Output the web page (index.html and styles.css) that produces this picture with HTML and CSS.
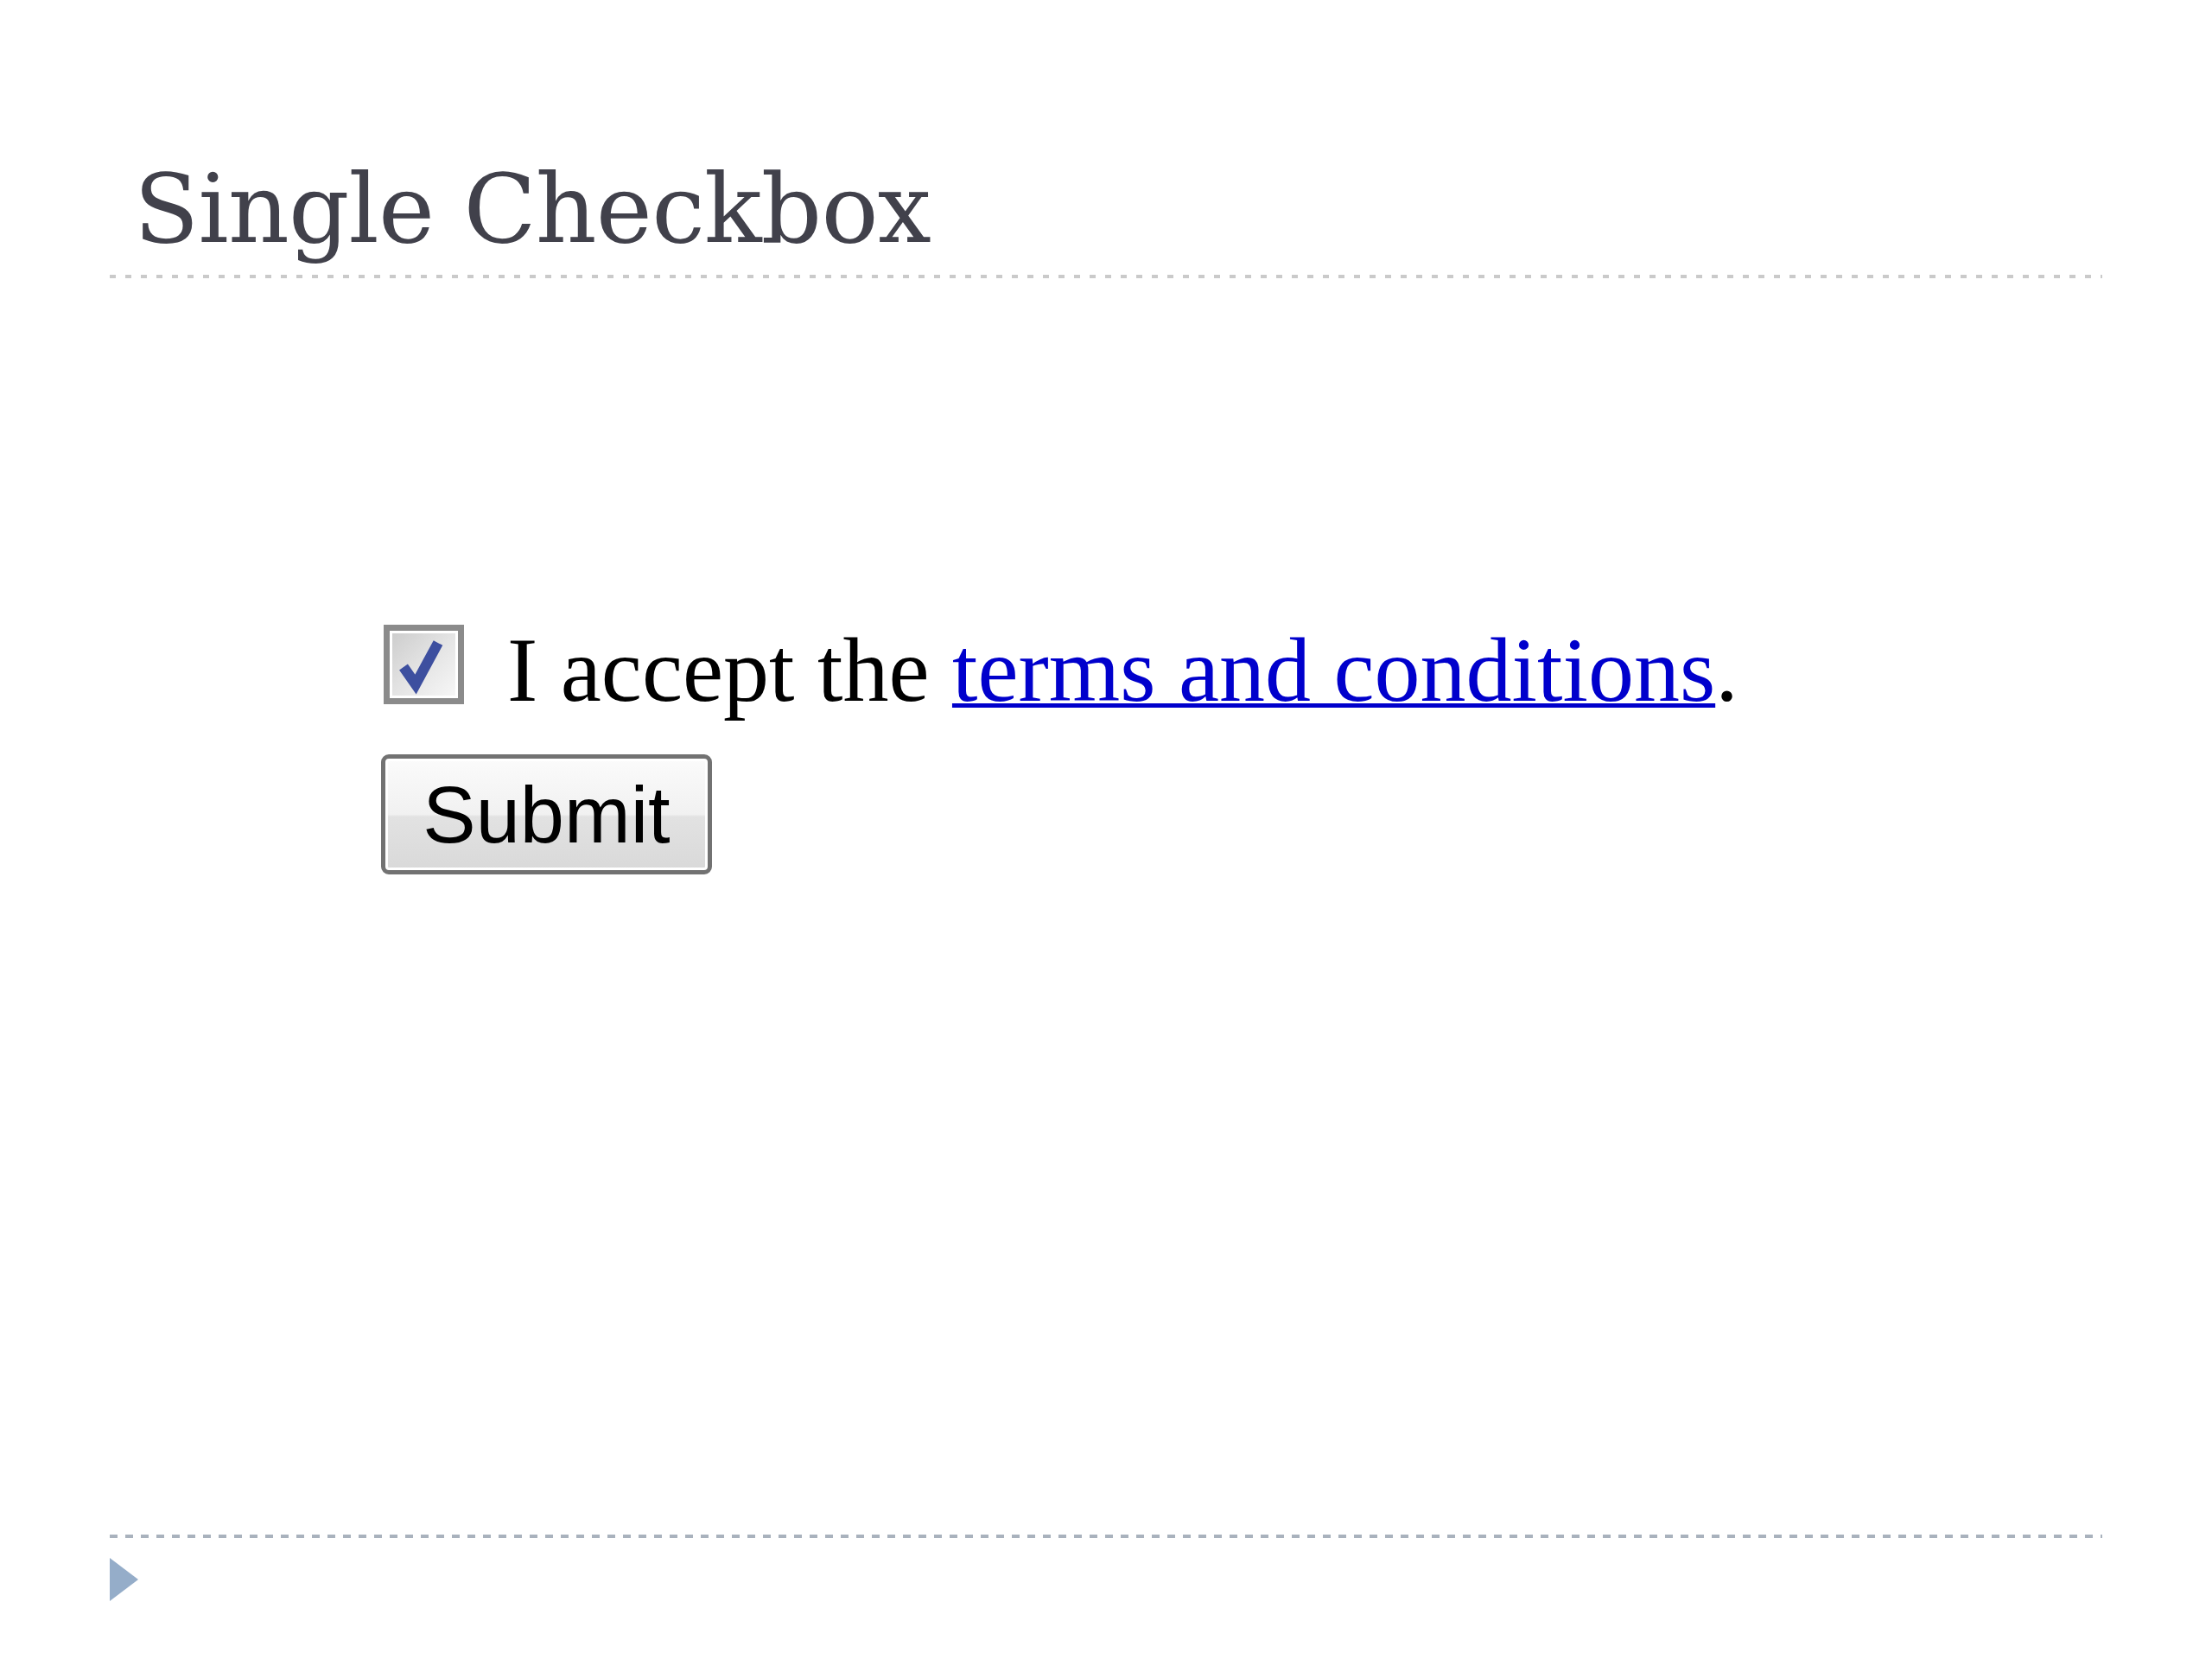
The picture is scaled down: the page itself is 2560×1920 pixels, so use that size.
FILE: index.html
```html
<!DOCTYPE html>
<html lang="en">
<head>
    <meta charset="UTF-8">
    <title>Single Checkbox</title>
    <link rel="stylesheet" href="styles.css">
</head>
<body>
    <div class="slide">
        <h1 class="slide-title">Single Checkbox</h1>
        <div class="rule rule-top"></div>

        <div class="slide-body">
            <label class="accept-row">
                <span class="check-box">
                    <svg width="79" height="78" viewBox="0 0 79 78">
                        <polyline points="16,42 30,62 56,14" fill="none" stroke="#3d4f9f" stroke-width="12" stroke-linejoin="miter"/>
                    </svg>
                </span>
                <span class="accept-text">I accept the <a href="#">terms and conditions</a>.</span>
            </label>
            <button class="submit-btn">Submit</button>
        </div>

        <div class="rule rule-bottom"></div>
        <svg class="slide-marker" width="33" height="50" viewBox="0 0 33 50">
            <polygon points="0,0 33,25 0,50" fill="#95adc9"/>
        </svg>
    </div>
</body>
</html>
```

FILE: styles.css
```css
body {
    margin: 0;
    background-color: #fff;
}

.slide {
    width: 2306px;
    margin-left: 127px;
    padding-top: 187px;
}

.slide-title {
    margin: 0;
    padding-left: 28px;
    font-family: "DejaVu Serif", serif;
    font-weight: normal;
    font-size: 110px;
    letter-spacing: -0.8px;
    line-height: 1;
    color: #41414b;
}

.rule {
    height: 4px;
}

.rule-top {
    margin-top: 21px;
    background: repeating-linear-gradient(to right, #cacaca 0 7px, transparent 7px 18px);
}

.rule-bottom {
    background: repeating-linear-gradient(to right, #a9b2bd 0 9px, transparent 9px 18px);
}

.slide-body {
    box-sizing: border-box;
    height: 1454px;
    padding-top: 401px;
    padding-left: 317px;
}

.accept-row {
    display: flex;
    align-items: flex-start;
}

.check-box {
    box-sizing: border-box;
    width: 93px;
    height: 92px;
    border: 7px solid #8b8b8b;
    background: linear-gradient(135deg, #cbcbcb 0%, #e4e4e4 50%, #f8f8f8 100%);
    box-shadow: inset 0 0 0 3px #fff;
}

.check-box svg {
    display: block;
}

.accept-text {
    margin-left: 50px;
    font-family: "Liberation Serif", "Times New Roman", serif;
    font-size: 106px;
    line-height: 1;
    color: #000;
}

.accept-text a {
    color: #0000cc;
    text-decoration-thickness: 5px;
}

.submit-btn {
    display: flex;
    align-items: center;
    justify-content: center;
    box-sizing: border-box;
    width: 383px;
    height: 139px;
    margin-top: 44px;
    margin-left: -3px;
    padding: 0;
    border: 5px solid #727272;
    border-radius: 9px;
    background: linear-gradient(#fbfbfb 0%, #f1f1f1 50%, #e2e2e2 52%, #d9d9d9 100%);
    box-shadow: inset 0 0 0 3px #fff;
    font-family: "Liberation Sans", Arial, sans-serif;
    font-size: 92px;
    line-height: 1;
    color: #000;
}

.slide-marker {
    display: block;
    margin-top: 23px;
}
```
